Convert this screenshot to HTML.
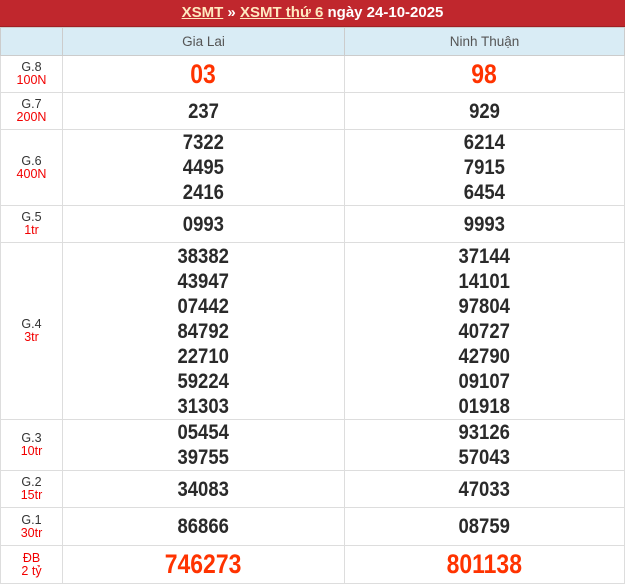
<!DOCTYPE html><html><head><meta charset="utf-8"><style>
body{margin:0;width:625px;height:577px;overflow:hidden;background:#fff;font-family:"Liberation Sans",Arial,sans-serif}
.top{height:27px;background:#c0272d;color:#fff;font-weight:bold;font-size:15px;text-align:center;line-height:26px;border-bottom:1px solid #a01f24;box-sizing:border-box}
.top u{color:#ffe9c0}
table{border-collapse:collapse;width:625px;table-layout:fixed}
td{border:1px solid #ddd;text-align:center;padding:0;vertical-align:middle}
tr.h td{background:#d9ecf5;height:27px;color:#555;font-size:13.5px;border-color:#ccc}
.l{font-size:12.5px;color:#333;line-height:13px}
.l span{color:#f20000;display:block}
.n{font-weight:bold;font-size:21px;color:#2a2a2a;line-height:25px}
.n b{display:inline-block;transform:scaleX(.88)}
.r{color:#ff3300;font-size:27px}
.r b{transform:scaleX(.85)}
</style></head><body>
<div class="top"><u>XSMT</u> » <u>XSMT thứ 6</u> ngày 24-10-2025</div>
<table>
<col style="width:62px"><col style="width:282px"><col>
<tr class="h"><td></td><td>Gia Lai</td><td>Ninh Thuận</td></tr>
<tr style="height:37px"><td class="l">G.8<span>100N</span></td><td class="n r"><b>03</b></td><td class="n r"><b>98</b></td></tr>
<tr style="height:37px"><td class="l">G.7<span>200N</span></td><td class="n"><b>237</b></td><td class="n"><b>929</b></td></tr>
<tr style="height:75px"><td class="l">G.6<span>400N</span></td><td class="n"><b>7322<br>4495<br>2416</b></td><td class="n"><b>6214<br>7915<br>6454</b></td></tr>
<tr style="height:37px"><td class="l">G.5<span>1tr</span></td><td class="n"><b>0993</b></td><td class="n"><b>9993</b></td></tr>
<tr style="height:177px"><td class="l">G.4<span>3tr</span></td><td class="n"><b>38382<br>43947<br>07442<br>84792<br>22710<br>59224<br>31303</b></td><td class="n"><b>37144<br>14101<br>97804<br>40727<br>42790<br>09107<br>01918</b></td></tr>
<tr style="height:50px"><td class="l">G.3<span>10tr</span></td><td class="n"><b>05454<br>39755</b></td><td class="n"><b>93126<br>57043</b></td></tr>
<tr style="height:37px"><td class="l">G.2<span>15tr</span></td><td class="n"><b>34083</b></td><td class="n"><b>47033</b></td></tr>
<tr style="height:38px"><td class="l">G.1<span>30tr</span></td><td class="n"><b>86866</b></td><td class="n"><b>08759</b></td></tr>
<tr style="height:38px"><td class="l" style="color:#f20000">ĐB<span>2 tỷ</span></td><td class="n r"><b>746273</b></td><td class="n r"><b>801138</b></td></tr>
</table>
</body></html>
